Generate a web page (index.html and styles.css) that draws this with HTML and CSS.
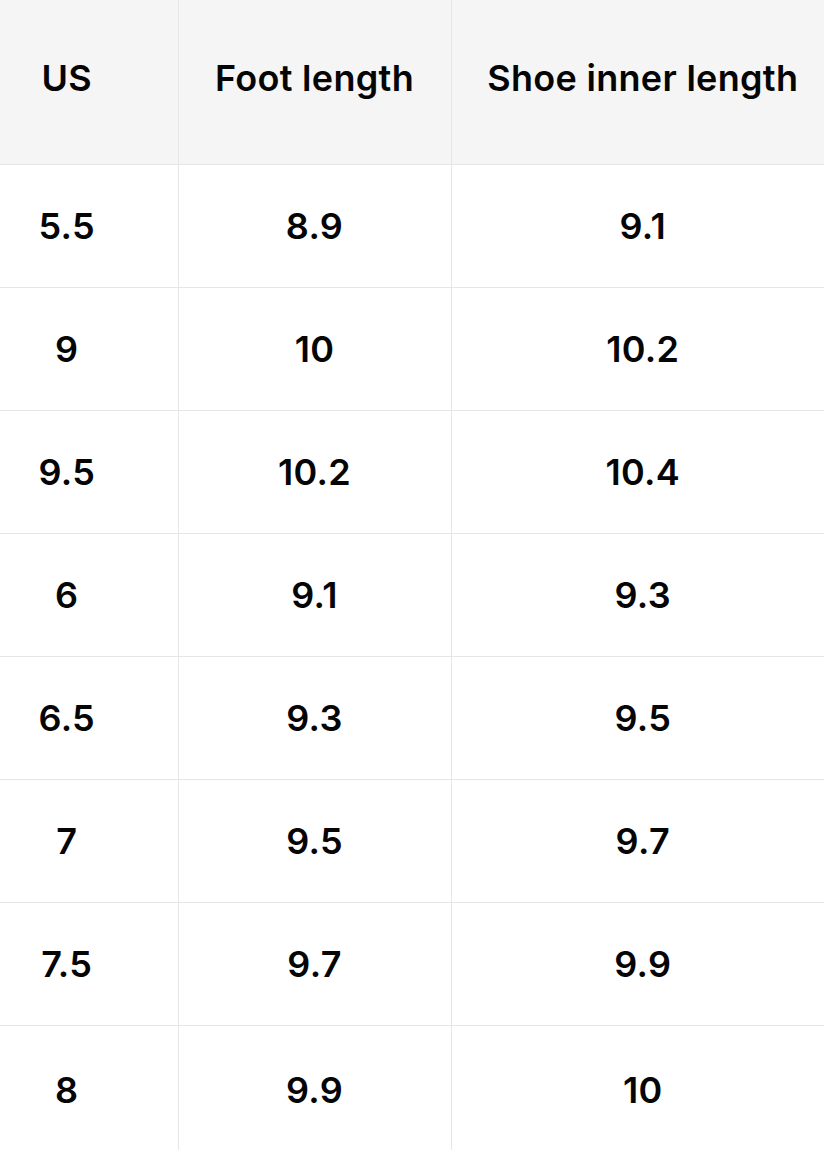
FILE: index.html
```html
<!DOCTYPE html>
<html lang="en">
<head>
<meta charset="utf-8">
<title>Size chart</title>
<link rel="stylesheet" href="styles.css">
</head>
<body>
<div class="wrap">
<table class="size-table">
  <colgroup>
    <col class="c1"><col class="c2"><col class="c3">
  </colgroup>
  <thead>
    <tr><th>US</th><th>Foot length</th><th>Shoe inner length</th></tr>
  </thead>
  <tbody>
    <tr><td>5.5</td><td>8.9</td><td>9.1</td></tr>
    <tr><td>9</td><td>10</td><td>10.2</td></tr>
    <tr><td>9.5</td><td>10.2</td><td>10.4</td></tr>
    <tr><td>6</td><td>9.1</td><td>9.3</td></tr>
    <tr><td>6.5</td><td>9.3</td><td>9.5</td></tr>
    <tr><td>7</td><td>9.5</td><td>9.7</td></tr>
    <tr><td>7.5</td><td>9.7</td><td>9.9</td></tr>
    <tr class="last"><td>8</td><td>9.9</td><td>10</td></tr>
  </tbody>
</table>
</div>
</body>
</html>
```
FILE: styles.css
```css
html, body {
  margin: 0;
  padding: 0;
  background: #ffffff;
}
body {
  width: 824px;
  height: 1150px;
  overflow: hidden;
  font-family: Inter, "Noto Sans", sans-serif;
  color: #050505;
}
.wrap {
  overflow: hidden;
  width: 824px;
}
.size-table {
  margin-left: -44px;
  width: 878px;
  border-collapse: collapse;
  table-layout: fixed;
}
.c1 { width: 222px; }
.c2 { width: 273px; }
.c3 { width: 383px; }
.size-table th,
.size-table td {
  border: 1px solid #e6e6e6;
  text-align: center;
  vertical-align: middle;
  font-size: 36px;
  font-weight: 600;
  padding: 0;
  letter-spacing: 0.3px;
}
.size-table thead th {
  background: #f5f5f5;
  height: 164px;
  box-sizing: border-box;
  padding-bottom: 8px;
  border-top: none;
}
.size-table td {
  height: 122px;
}
.size-table tr > :first-child {
  border-left: none;
}
.size-table tr > :last-child {
  border-right: none;
}
.size-table tr.last td {
  border-bottom: none;
  vertical-align: top;
  padding-top: 42px;
  height: 140px;
  box-sizing: border-box;
}
```
